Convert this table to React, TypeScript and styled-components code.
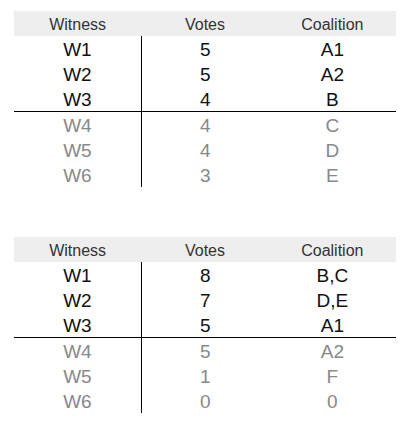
import React from "react";
import styled, { createGlobalStyle } from "styled-components";

const Global = createGlobalStyle`
  html, body { margin: 0; padding: 0; background: #fff; }
  body { font-family: "Liberation Sans", Arial, sans-serif; }
`;

const Page = styled.div`
  display: flex;
  flex-direction: column;
  gap: 50px;
  padding: 11px 0 0 14px;
`;

const Table = styled.table`
  width: 382px;
  border-collapse: collapse;
  table-layout: fixed;
`;

const Th = styled.th`
  padding: 2px 0 0;
  line-height: 23px;
  background: #eeeeee;
  color: #333;
  font-weight: normal;
  font-size: 16px;
  text-align: center;
`;

const Td = styled.td<{ $muted?: boolean; $divider?: boolean; $first?: boolean }>`
  padding: 3px 0 0;
  line-height: 22px;
  text-align: center;
  font-size: 19px;
  color: ${(p) => (p.$muted ? "#888888" : "#111111")};
  border-right: ${(p) => (p.$first ? "1px solid #000" : "none")};
  border-bottom: ${(p) => (p.$divider ? "1px solid #000" : "none")};
`;

type Row = [string, string, string];

const Ranking = ({ rows }: { rows: Row[] }) => (
  <Table>
    <thead>
      <tr>
        <Th>Witness</Th>
        <Th>Votes</Th>
        <Th>Coalition</Th>
      </tr>
    </thead>
    <tbody>
      {rows.map((r, i) => (
        <tr key={i}>
          {r.map((c, j) => (
            <Td key={j} $muted={i >= 3} $divider={i === 2} $first={j === 0}>
              {c}
            </Td>
          ))}
        </tr>
      ))}
    </tbody>
  </Table>
);

const first: Row[] = [
  ["W1", "5", "A1"],
  ["W2", "5", "A2"],
  ["W3", "4", "B"],
  ["W4", "4", "C"],
  ["W5", "4", "D"],
  ["W6", "3", "E"],
];

const second: Row[] = [
  ["W1", "8", "B,C"],
  ["W2", "7", "D,E"],
  ["W3", "5", "A1"],
  ["W4", "5", "A2"],
  ["W5", "1", "F"],
  ["W6", "0", "0"],
];

export default function App() {
  return (
    <>
      <Global />
      <Page>
        <Ranking rows={first} />
        <Ranking rows={second} />
      </Page>
    </>
  );
}
